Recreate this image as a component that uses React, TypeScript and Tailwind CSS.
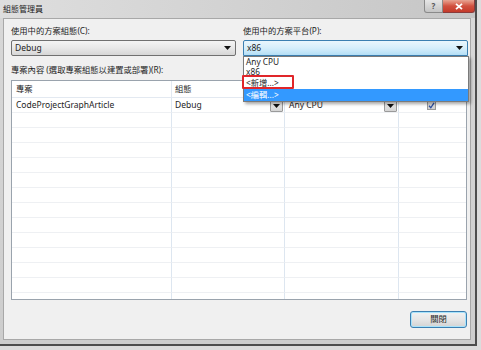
import React from "react";

const FONT = { fontFamily: '"Noto Sans", "Noto Sans CJK TC", sans-serif' };

function Arrow() {
  return (
    <svg width="7" height="4" viewBox="0 0 7 4">
      <polygon points="0,0 7,0 3.5,4" fill="#111" />
    </svg>
  );
}

function CellDrop() {
  return (
    <div className="ml-auto mr-[1px] mt-[1px] w-[13px] h-[13px] border border-[#9a9a9a] rounded-[1px] bg-gradient-to-b from-[#f4f4f4] to-[#d4d4d4] flex items-center justify-center">
      <Arrow />
    </div>
  );
}

export default function App() {
  const rows = Array.from({ length: 13 });
  return (
    <div
      className="w-[481px] h-[350px] bg-[#dcdcdc] overflow-hidden text-[8.3px] text-[#1e1e1e]"
      style={FONT}
    >
      <div className="relative w-[477px] h-[346px] border-r-2 border-b-2 border-[#4d4d4d] bg-gradient-to-b from-[#d8d8d8] to-[#cdcdcd] flex flex-col">
        {/* title bar */}
        <div className="h-[18px] flex items-start shrink-0 bg-gradient-to-r from-[#dedede] via-[#d2d2d2] to-[#c6c6c6]">
          <div className="pl-[3px] pt-[3px] leading-[11px] text-[8px] text-[#222]">組態管理員</div>
          <div className="ml-auto flex">
            <div className="w-[19px] h-[13px] border border-t-0 border-[#8a8a8a] rounded-bl-[3px] bg-gradient-to-b from-[#e6e6e6] to-[#c4c4c4] flex items-center justify-center text-[8px] leading-none text-[#555] font-bold">
              ?
            </div>
            <div className="w-[32px] h-[13px] border border-t-0 border-l-0 border-[#8a3b3b] rounded-br-[3px] bg-gradient-to-b from-[#e7a493] via-[#d1503f] to-[#c43a2a] flex items-center justify-center">
              <svg width="8" height="7" viewBox="0 0 8 7">
                <path d="M1 0.8 L7 6.2 M7 0.8 L1 6.2" stroke="#fff" strokeWidth="1.8" />
              </svg>
            </div>
          </div>
        </div>

        {/* content */}
        <div className="ml-[3px] mr-[4px] h-[322px] border border-[#a8a8a8] bg-[#f0f0f0] pl-[7px] pr-[2px] pt-[6px] flex flex-col">
          <div className="flex gap-[7px]">
            <div className="w-[225px]">
              <div className="h-[12px] leading-[12px]">使用中的方案組態(C):</div>
              <div className="mt-[3px] h-[16px] border border-[#707070] rounded-[2px] bg-gradient-to-b from-[#f4f4f4] via-[#e8e8e8] to-[#d6d6d6] flex items-center pl-[3px] pr-[4px]">
                <span className="leading-[12px] text-[8.5px]">Debug</span>
                <span className="ml-auto">
                  <Arrow />
                </span>
              </div>
            </div>
            <div className="w-[225px]">
              <div className="h-[12px] leading-[12px]">使用中的方案平台(P):</div>
              <div className="mt-[3px] h-[16px] border border-[#3c7fb1] rounded-t-[2px] bg-gradient-to-b from-[#eaf6fd] via-[#d6eefb] to-[#b4dff6] flex items-center pl-[3px] pr-[4px]">
                <span className="leading-[12px] text-[8.5px]">x86</span>
                <span className="ml-auto">
                  <Arrow />
                </span>
              </div>
            </div>
          </div>

          <div className="mt-[8px] h-[12px] leading-[12px]">專案內容 (選取專案組態以建置或部署)(R):</div>

          <div className="mt-[4px] w-[456px] h-[220px] border border-[#9aa3ad] bg-white overflow-hidden">
            <div className="grid grid-cols-[160px_113px_114px_1fr] text-[8.5px]">
              <div className="h-[17px] border-r border-b border-[#e3e9f1] pl-[4px] leading-[16px] text-[8.3px]">專案</div>
              <div className="h-[17px] border-r border-b border-[#e3e9f1] pl-[3px] leading-[16px] text-[8.3px]">組態</div>
              <div className="h-[17px] border-r border-b border-[#e3e9f1] pl-[4px] leading-[16px] text-[8.3px]">平台</div>
              <div className="h-[17px] border-b border-[#e3e9f1] pl-[4px] leading-[16px] text-[8.3px]">建置</div>

              <div className="h-[15px] border-r border-b border-r-[#dde6f0] border-b-[#eef0f3] pl-[4px] leading-[14px]">
                CodeProjectGraphArticle
              </div>
              <div className="h-[15px] border-r border-b border-r-[#dde6f0] border-b-[#eef0f3] pl-[3px] flex items-start">
                <span className="leading-[14px]">Debug</span>
                <CellDrop />
              </div>
              <div className="h-[15px] border-r border-b border-r-[#dde6f0] border-b-[#eef0f3] pl-[4px] flex items-start">
                <span className="leading-[14px]">Any CPU</span>
                <CellDrop />
              </div>
              <div className="h-[15px] border-b border-b-[#eef0f3] pl-[28px] pt-[3px]">
                <div className="w-[9px] h-[9px] border border-[#9a9a9a] bg-gradient-to-b from-[#e4e4e4] to-[#cfcfcf] flex items-center justify-center">
                  <svg width="7" height="7" viewBox="0 0 7 7">
                    <path d="M1 3.8 L2.8 5.8 L6 0.8" stroke="#2b4ea0" strokeWidth="1.3" fill="none" />
                  </svg>
                </div>
              </div>

              {rows.map((_, i) => (
                <React.Fragment key={i}>
                  <div className="h-[15px] border-r border-b border-r-[#dde6f0] border-b-[#eef0f3]" />
                  <div className="h-[15px] border-r border-b border-r-[#dde6f0] border-b-[#eef0f3]" />
                  <div className="h-[15px] border-r border-b border-r-[#dde6f0] border-b-[#eef0f3]" />
                  <div className="h-[15px] border-b border-b-[#eef0f3]" />
                </React.Fragment>
              ))}
            </div>
          </div>

          <div className="mt-[11px] flex justify-end pr-[1px]">
            <div className="w-[57px] h-[17px] rounded-[3px] border border-[#3c7fb1] shadow-[inset_0_0_0_1px_#a8e3fb] bg-gradient-to-b from-[#f2f2f2] via-[#e6e6e6] to-[#d3d3d3] flex items-center justify-center leading-none text-[8.3px]">
              關閉
            </div>
          </div>
        </div>

        {/* dropdown list overlay */}
        <div className="absolute left-[243px] top-[56px] w-[226px] border border-[#7a7a7a] bg-white shadow-[2px_2px_3px_rgba(0,0,0,0.35)] text-[8.3px]">
          <div className="h-[10px] leading-[10px] pl-[2px]">Any CPU</div>
          <div className="h-[10px] leading-[10px] pl-[2px]">x86</div>
          <div className="h-[12px] leading-[11px] pl-[2px]">&lt;新增...&gt;</div>
          <div className="h-[12px] leading-[12px] pl-[2px] bg-[#3399ff] text-white">&lt;編輯...&gt;</div>
        </div>
        <div className="absolute left-[242px] top-[75px] w-[52px] h-[14px] border-2 border-[#e0262a] rounded-[1px]" />
      </div>
    </div>
  );
}
